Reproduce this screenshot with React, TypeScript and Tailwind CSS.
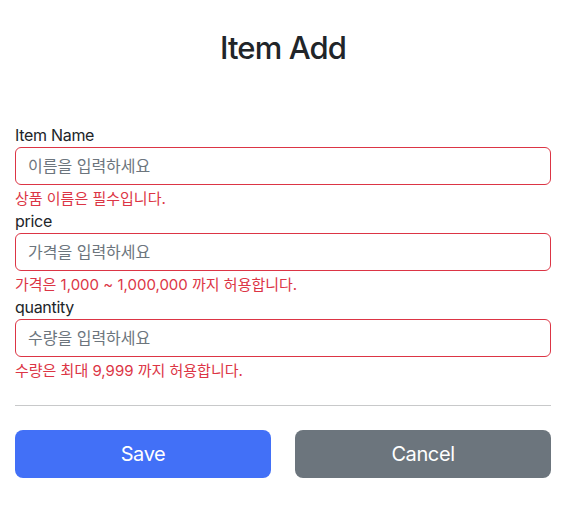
import React from "react";

const font = { fontFamily: 'Inter, "Noto Sans CJK KR", "Noto Sans", sans-serif' };

function Field({ label, placeholder, error }: { label: string; placeholder: string; error: string }) {
  return (
    <div className="flex flex-col">
      <label className="block text-[16px] leading-[24px] tracking-[-0.3px] text-[#212529]">{label}</label>
      <input
        className="h-[38px] w-full rounded-[6px] border border-[#dc3545] px-[12px] text-[16px] text-[#212529] outline-none placeholder:text-[#6c757d]"
        placeholder={placeholder}
        style={font}
      />
      <div className="mt-[4px] text-[15px] leading-[20px] text-[#dc3545]">{error}</div>
    </div>
  );
}

export default function App() {
  return (
    <div className="min-h-[509px] w-[570px] bg-white" style={font}>
      <div className="ml-[15px] w-[536px]">
        <h2 className="pt-[29px] text-center text-[31px] font-medium leading-[38px] tracking-[-0.9px] text-[#212529]">Item Add</h2>
        <div className="mt-[56px] flex flex-col">
          <Field label="Item Name" placeholder="이름을 입력하세요" error="상품 이름은 필수입니다." />
          <Field label="price" placeholder="가격을 입력하세요" error="가격은 1,000 ~ 1,000,000 까지 허용합니다." />
          <Field label="quantity" placeholder="수량을 입력하세요" error="수량은 최대 9,999 까지 허용합니다." />
        </div>
        <hr className="my-[24px] border-0 border-t border-[#c8c9ca]" />
        <div className="grid grid-cols-2 gap-[24px]">
          <button className="h-[48px] rounded-[8px] bg-[#4270f7] text-[20px] tracking-[-0.4px] text-white">Save</button>
          <button className="h-[48px] rounded-[8px] bg-[#6c757d] text-[20px] tracking-[-0.4px] text-white">Cancel</button>
        </div>
      </div>
    </div>
  );
}
